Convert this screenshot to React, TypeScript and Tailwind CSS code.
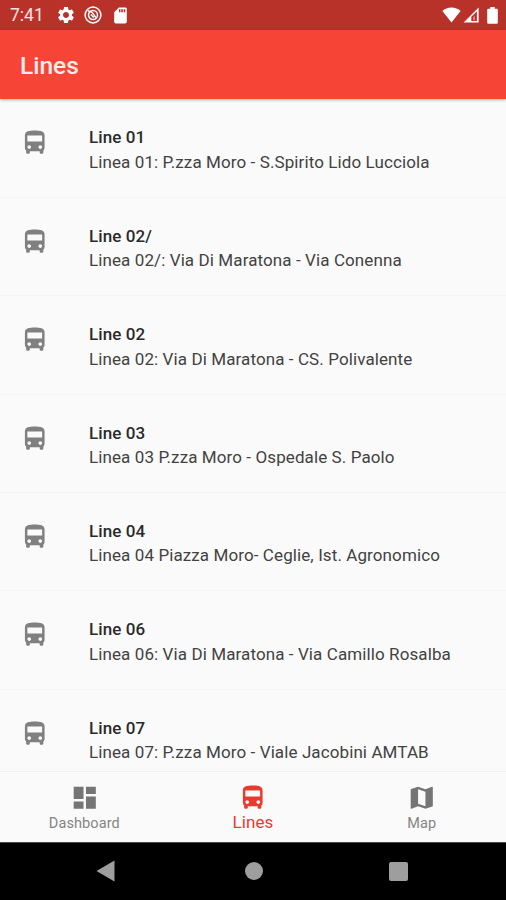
import type { IconType } from "react-icons";
import { MdDashboard, MdDirectionsBus, MdMap, MdSdCard, MdSettings } from "react-icons/md";

type Line = { name: string; route: string };

const LINES: Line[] = [
  { name: "Line 01", route: "Linea 01: P.zza Moro - S.Spirito Lido Lucciola" },
  { name: "Line 02/", route: "Linea 02/: Via Di Maratona - Via Conenna" },
  { name: "Line 02", route: "Linea 02: Via Di Maratona - CS. Polivalente" },
  { name: "Line 03", route: "Linea 03 P.zza Moro - Ospedale S. Paolo" },
  { name: "Line 04", route: "Linea 04 Piazza Moro- Ceglie, Ist. Agronomico" },
  { name: "Line 06", route: "Linea 06: Via Di Maratona - Via Camillo Rosalba" },
  { name: "Line 07", route: "Linea 07: P.zza Moro - Viale Jacobini AMTAB" },
];

const TABS: { label: string; icon: IconType; active?: boolean }[] = [
  { label: "Dashboard", icon: MdDashboard },
  { label: "Lines", icon: MdDirectionsBus, active: true },
  { label: "Map", icon: MdMap },
];

function StatusBar() {
  return (
    <div className="flex h-[30px] shrink-0 items-center bg-[#b83229] pl-[10px] pr-[8px] text-white">
      <span className="w-[46px] pt-[2px] text-[17.5px] leading-none text-[#fbe3e1]">7:41</span>
      <MdSettings size={20} />
      <svg width="18" height="18" viewBox="0 0 18 18" fill="none" stroke="currentColor" className="ml-[8px]">
        <circle cx="9" cy="9" r="7.9" strokeWidth="1.5" />
        <circle cx="9" cy="9" r="4.5" strokeWidth="1.5" />
        <path d="M3.8 4.6 8 6.4l4.4 5.8M6.8 8.6l3 3" strokeWidth="1.4" />
      </svg>
      <MdSdCard size={19} className="ml-[9px]" />
      <div className="ml-auto flex items-center">
        <svg width="19" height="16" viewBox="0 0 19 16" fill="currentColor">
          <path d="M9.5 15.6.4 4.1C2.8 1.7 6 .5 9.5.5s6.7 1.2 9.1 3.6z" />
        </svg>
        <svg width="16" height="16" viewBox="0 0 16 16" className="ml-[2px]">
          <path d="M.6 15.6 15.6.6v15z" fill="currentColor" />
          <path d="M8.3 13.9V9.8l5.6-5.6v9.7z" fill="#b83229" />
          <path d="M10.1 13.2v-2.8l1.8-1.8v4.6z" fill="currentColor" fillOpacity="0.45" />
        </svg>
        <svg width="11" height="17" viewBox="0 0 11 17" fill="currentColor" className="ml-[8px]">
          <path d="M3.3 0h4.4v1.7h1.8c.8 0 1.3.5 1.3 1.3v12.5c0 .8-.5 1.3-1.3 1.3h-8C.7 16.8.2 16.3.2 15.5V3c0-.8.5-1.3 1.3-1.3h1.8z" />
        </svg>
      </div>
    </div>
  );
}

function LineRow({ line }: { line: Line }) {
  return (
    <li className="flex h-[98.4px] shrink-0 border-b border-[#f4f4f4] pl-[20px] pt-[26px]">
      <MdDirectionsBus size={29.5} className="mt-[3px] shrink-0 text-[#808080]" />
      <div className="ml-[39.5px] whitespace-nowrap text-[17px] leading-[24.4px]">
        <div className="font-medium tracking-[0.1px] text-[#2a2a2a]">{line.name}</div>
        <div className="tracking-[0.1px] text-[#424242]">{line.route}</div>
      </div>
    </li>
  );
}

function BottomNav() {
  return (
    <nav className="grid h-[71px] shrink-0 grid-cols-3 border-t border-[#efefef] bg-[#fafafa]">
      {TABS.map(({ label, icon: Icon, active }) => (
        <button
          key={label}
          type="button"
          className={
            "flex flex-col items-center pt-[10.5px] " +
            (active ? "text-[#e93a30]" : "text-[#757575]")
          }
        >
          <Icon size={29.5} />
          <span
            className={
              active
                ? "pt-px text-[17px] leading-[19px] tracking-[0.1px]"
                : "pt-[2px] text-[14.5px] leading-[19px] tracking-[0.1px] text-[#858585]"
            }
          >
            {label}
          </span>
        </button>
      ))}
    </nav>
  );
}

function SystemNav() {
  return (
    <div className="flex h-[58px] shrink-0 items-center border-t border-[#4a4a4a] bg-black pb-px pl-[96px] text-[#9e9e9e]">
      <svg width="20" height="22" viewBox="0 0 20 22" fill="currentColor">
        <path d="M.5 11 18.5.5v21z" />
      </svg>
      <span className="ml-[129px] h-[18px] w-[18px] rounded-full bg-[#9e9e9e]" />
      <span className="ml-[126px] h-[19px] w-[19px] rounded-[2px] bg-[#9e9e9e]" />
    </div>
  );
}

export default function App() {
  return (
    <div className="flex h-[900px] w-[506px] flex-col overflow-hidden bg-[#fafafa] font-[Roboto,sans-serif]">
      <StatusBar />
      <header className="z-10 flex h-[69px] shrink-0 items-center bg-[#f64436] pl-[20px] shadow-[0_1px_3px_rgba(0,0,0,0.3)]">
        <h1 className="pt-[3px] text-[24.5px] font-medium text-[#ffeceb]">Lines</h1>
      </header>
      <ul className="flex min-h-0 flex-1 flex-col overflow-hidden pt-[0.4px]">
        {LINES.map((line) => (
          <LineRow key={line.name} line={line} />
        ))}
      </ul>
      <BottomNav />
      <SystemNav />
    </div>
  );
}
